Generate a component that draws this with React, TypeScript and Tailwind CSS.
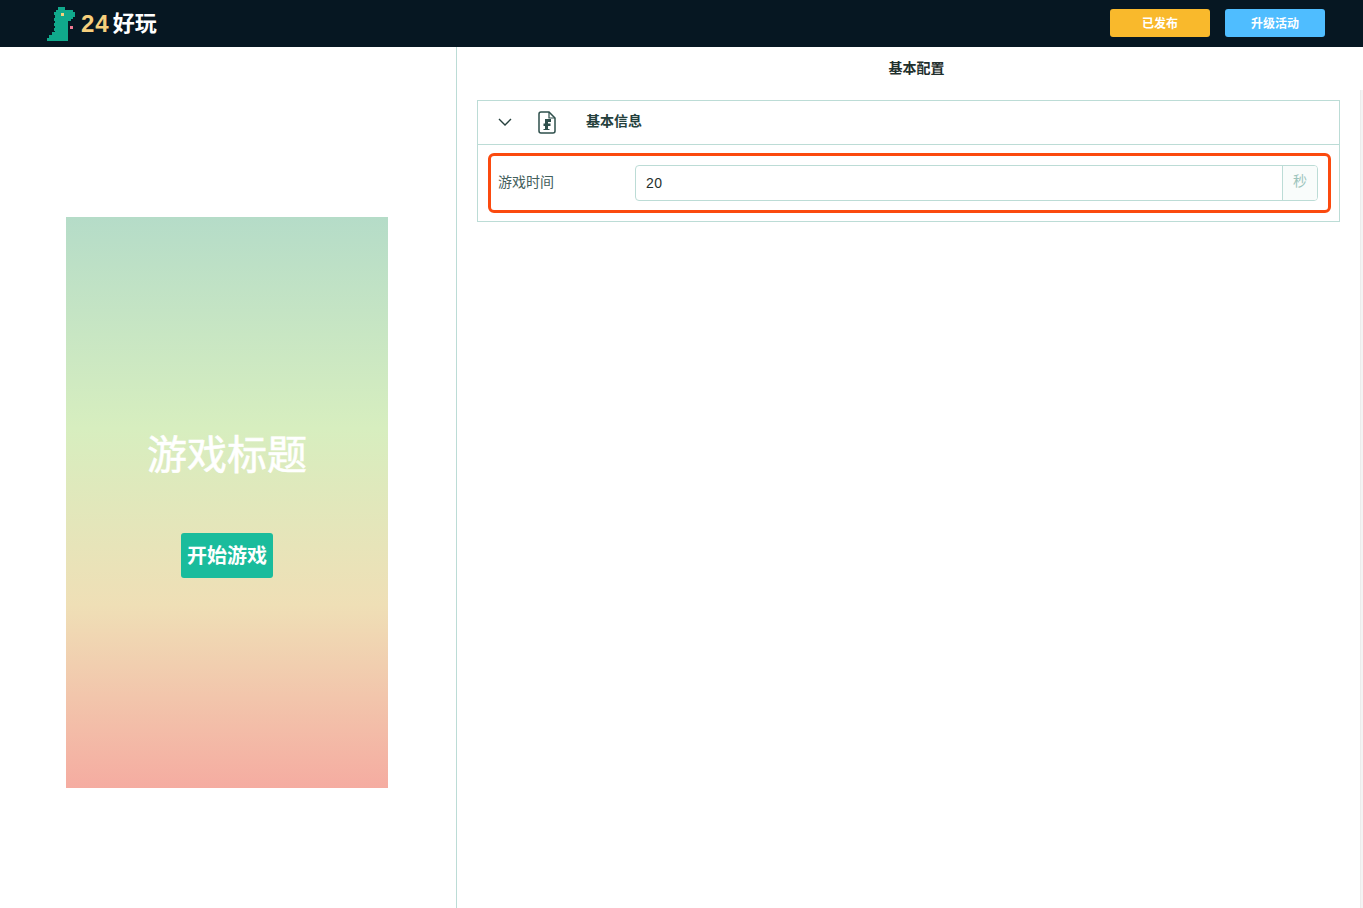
const cjk = "font-['Liberation_Sans','Noto_Sans_CJK_SC',sans-serif]";

function DinoLogo() {
  return (
    <svg width="28" height="34" viewBox="0 0 28 34" shapeRendering="crispEdges">
      <path
        d="M11 0h7v3h8v2h2v5h-2v2h-2v2h-3v20H0v-3h2v-3h3v-3h3v-1H7v-3h1v-2H7v-3h1v-2H7v-3h1V8H7V5h2V3h2z"
        fill="#10a98c"
      />
      <rect x="14" y="6" width="3" height="3" fill="#f6cf7c" />
      <rect x="23" y="19" width="3" height="3" fill="#f07a94" />
    </svg>
  );
}

function FileIcon() {
  return (
    <svg width="18" height="23" viewBox="0 0 18 23" fill="none">
      <path
        d="M3 1h8l6 6v13a2 2 0 0 1-2 2H3a2 2 0 0 1-2-2V3a2 2 0 0 1 2-2z"
        stroke="#2e4f4b"
        strokeWidth="1.5"
      />
      <path d="M11 1v6h6" stroke="#2e4f4b" strokeWidth="1.2" />
      <path d="M7 8h6v3h-3v1.500h2.500v2.500H10v3h1.500v1H5.500v-1H7v-3H5.500v-2.500H7z" fill="#2e4f4b" />
    </svg>
  );
}

function Chevron() {
  return (
    <svg width="14" height="8" viewBox="0 0 14 8" fill="none">
      <path d="M1 1l6 6 6-6" stroke="#26403d" strokeWidth="1.4" />
    </svg>
  );
}

export default function App() {
  return (
    <div className={`${cjk} h-[908px] w-[1363px] overflow-hidden bg-white flex flex-col`}>
      <header className="h-[47px] shrink-0 bg-[#061722] flex items-center pl-[47px] pr-[38px]">
        <DinoLogo />
        <span className="ml-[6px] text-[24px] font-bold text-[#f6cf7c] tracking-[1px]">24</span>
        <span className="ml-[3px] text-[22px] font-bold text-white">好玩</span>
        <div className="ml-auto mb-[1px] flex gap-[15px]">
          <button className="h-[28px] w-[100px] pt-[1px] rounded-[3px] bg-[#f9b92c] text-white text-xs font-bold">已发布</button>
          <button className="h-[28px] w-[100px] pt-[1px] rounded-[3px] bg-[#4fbdff] text-white text-xs font-bold">升级活动</button>
        </div>
      </header>
      <div className="flex flex-1 min-h-0">
        <aside className="w-[457px] shrink-0 border-r border-[#bcdcd6] pl-[66px] pt-[170px]">
          <div className="w-[322px] h-[571px] bg-[linear-gradient(180deg,#b5dcc8_0%,#d7eebf_37%,#efdfb6_68%,#f5aca1_100%)] flex flex-col items-center">
            <div className="mt-[211px] text-[40px] leading-[54px] text-white [-webkit-text-stroke:0.6px_white]">游戏标题</div>
            <button className="mt-[51px] h-[45px] w-[92px] rounded-[3px] bg-[#1abc9c] text-white text-[20px] font-bold">开始游戏</button>
          </div>
        </aside>
        <main className="flex-1 min-w-0 relative">
          <div className="h-[53px] pl-[13px] pt-[12px] text-center text-sm leading-[18px] font-bold text-[#1f2f2d]">基本配置</div>
          <div className="ml-[20px] w-[863px] h-[122px] border border-[#bcdcd6]">
            <div className="h-[44px] border-b border-[#bcdcd6] flex items-center pl-[20px]">
              <span className="mb-[2px]"><Chevron /></span>
              <span className="ml-[26px] mb-[1px]"><FileIcon /></span>
              <span className="ml-[30px] mb-[3px] text-sm font-bold text-[#24403c]">基本信息</span>
            </div>
            <div className="ml-[10px] mr-[8px] mt-[8px] h-[60px] rounded-[6px] border-[3px] border-[#fb4a0f] flex items-center pl-[7px] pr-[10px]">
              <span className="w-[137px] mb-[2px] text-sm text-[#44605c]">游戏时间</span>
              <div className="flex-1 h-[36px] rounded-[4px] border border-[#bcdcd6] flex overflow-hidden">
                <span className="flex-1 pl-[10px] text-sm leading-[34px] tracking-[0.5px] text-[#1f2f2d]">20</span>
                <span className="w-[35px] border-l border-[#bcdcd6] bg-[#f9fcfb] text-center text-sm leading-[31px] text-[#9cc4bc]">秒</span>
              </div>
            </div>
          </div>
          <div className="absolute right-0 top-[43px] bottom-0 w-[3px] bg-[#f4f4f4] border-l border-[#ececec]" />
        </main>
      </div>
    </div>
  );
}
